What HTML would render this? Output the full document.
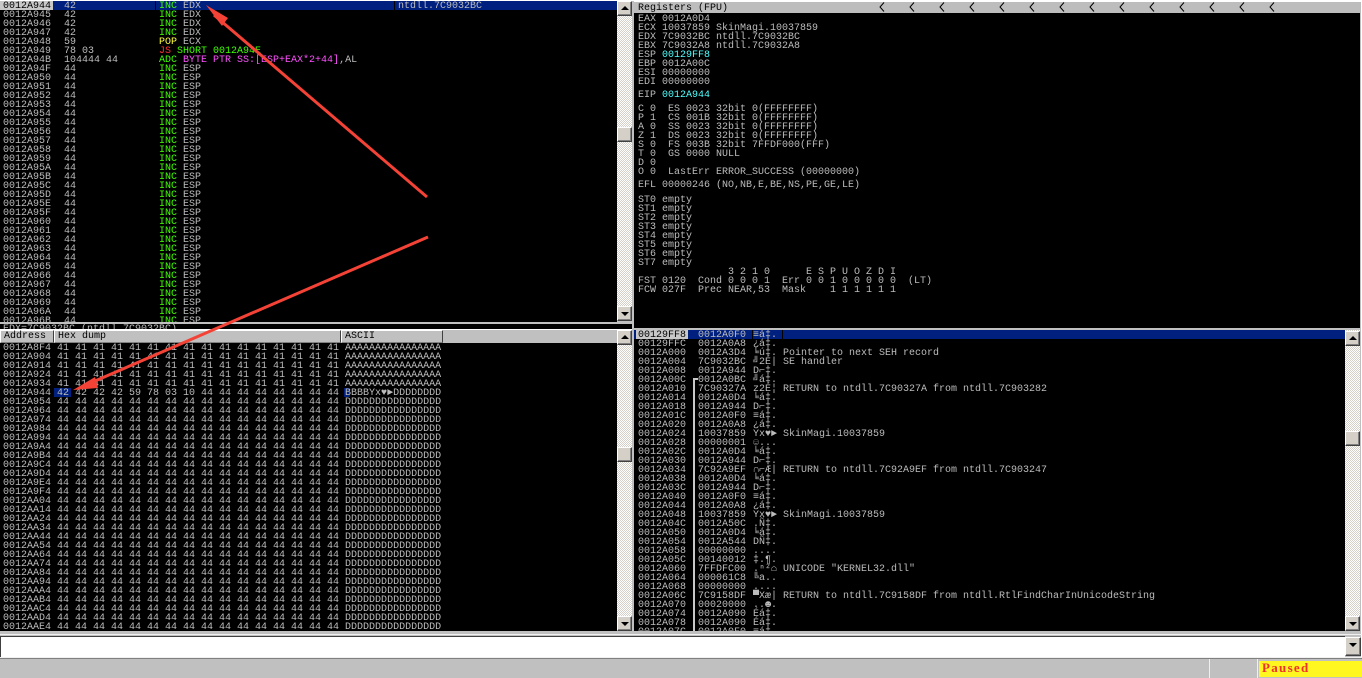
<!DOCTYPE html>
<html><head><meta charset="utf-8">
<style>
html,body{margin:0;padding:0;width:1362px;height:678px;overflow:hidden;background:#c0c0c0}
.a{position:absolute}
pre{position:absolute;margin:0;padding-top:1px;font:10px/9px "Liberation Mono","DejaVu Sans Mono",monospace;color:#bcbcbc;white-space:pre}
.g{color:#40ff00}.y{color:#ffff40}.r{color:#ff3030}.m{color:#ff50ff}.c{color:#50ffff}
.k{background:#000;overflow:hidden}
.sb{background-color:#f4f4f4;background-image:repeating-conic-gradient(#d4d0c8 0 25%,#fff 0 50%);background-size:2px 2px}
.btn{position:absolute;box-sizing:border-box;width:15px;height:15px;background:#d4d0c8;border:1px solid;border-color:#fff #404040 #404040 #fff;box-shadow:inset -1px -1px 0 #808080}
.up:after,.dn:after{content:"";position:absolute;left:3px;border-left:4px solid transparent;border-right:4px solid transparent}
.up:after{top:4px;border-bottom:4px solid #000}
.dn:after{top:5px;border-top:4px solid #000}
.hd{position:absolute;box-sizing:border-box;height:13px;background:#c0c0c0;border-top:1px solid #fff;border-left:1px solid #fff;border-right:1px solid #404040;border-bottom:1px solid #808080;font:10px/12px "Liberation Mono",monospace;color:#000;padding-left:3px;white-space:pre}
</style></head>
<body>
<div class="a" style="left:0;top:0;width:1362px;height:1px;background:#fff"></div>

<!-- Disassembly -->
<div class="a k" style="left:0;top:1px;width:617px;height:321px">
<div class="a" style="left:0;top:0;width:617px;height:9px;background:#00207f"></div>
<div class="a" style="left:0;top:0;width:53px;height:9px;background:#c8c8c8"></div>
<div class="a" style="left:155px;top:0;width:1px;height:9px;background:#000"></div>
<div class="a" style="left:394px;top:0;width:1px;height:9px;background:#000"></div>
<pre style="left:3px;top:0"><span style="color:#000">0012A944</span>
0012A945
0012A946
0012A947
0012A948
0012A949
0012A94B
0012A94F
0012A950
0012A951
0012A952
0012A953
0012A954
0012A955
0012A956
0012A957
0012A958
0012A959
0012A95A
0012A95B
0012A95C
0012A95D
0012A95E
0012A95F
0012A960
0012A961
0012A962
0012A963
0012A964
0012A965
0012A966
0012A967
0012A968
0012A969
0012A96A
0012A96B</pre>
<pre style="left:64px;top:0">42
42
42
42
59
78 03
104444 44
44
44
44
44
44
44
44
44
44
44
44
44
44
44
44
44
44
44
44
44
44
44
44
44
44
44
44
44
44</pre>
<pre style="left:159px;top:0"><span class="g">INC</span> EDX
<span class="g">INC</span> EDX
<span class="g">INC</span> EDX
<span class="g">INC</span> EDX
<span class="y">POP</span> ECX
<span class="r">JS</span> <span class="g">SHORT 0012A94E</span>
<span class="g">ADC</span> <span class="m">BYTE PTR SS:[ESP+EAX*2+44]</span>,AL
<span class="g">INC</span> ESP
<span class="g">INC</span> ESP
<span class="g">INC</span> ESP
<span class="g">INC</span> ESP
<span class="g">INC</span> ESP
<span class="g">INC</span> ESP
<span class="g">INC</span> ESP
<span class="g">INC</span> ESP
<span class="g">INC</span> ESP
<span class="g">INC</span> ESP
<span class="g">INC</span> ESP
<span class="g">INC</span> ESP
<span class="g">INC</span> ESP
<span class="g">INC</span> ESP
<span class="g">INC</span> ESP
<span class="g">INC</span> ESP
<span class="g">INC</span> ESP
<span class="g">INC</span> ESP
<span class="g">INC</span> ESP
<span class="g">INC</span> ESP
<span class="g">INC</span> ESP
<span class="g">INC</span> ESP
<span class="g">INC</span> ESP
<span class="g">INC</span> ESP
<span class="g">INC</span> ESP
<span class="g">INC</span> ESP
<span class="g">INC</span> ESP
<span class="g">INC</span> ESP
<span class="g">INC</span> ESP</pre>
<pre style="left:398px;top:0">ntdll.7C9032BC</pre>
</div>
<div class="a sb" style="left:617px;top:1px;width:15px;height:320px"></div>
<div class="btn up" style="left:617px;top:1px"></div>
<div class="btn" style="left:617px;top:127px"></div>
<div class="btn dn" style="left:617px;top:306px"></div>

<!-- Info pane -->
<div class="a k" style="left:0;top:324px;width:632px;height:5px">
<pre style="left:3px;top:0">EDX=7C9032BC (ntdll.7C9032BC)</pre>
</div>
<div class="a" style="left:0;top:329px;width:632px;height:1px;background:#fff"></div>

<!-- Registers -->
<div class="a" style="left:634px;top:1px;width:727px;height:12px;background:#bdbdbd;border-top:1px solid #fff;box-sizing:border-box"></div>
<pre style="left:638px;top:3px;color:#000">Registers (FPU)</pre>
<svg class="a" style="left:0;top:0" width="1362" height="14"><path fill="none" stroke="#000" d="M884 2.5l-4 4.5 4 4.5M914 2.5l-4 4.5 4 4.5M944 2.5l-4 4.5 4 4.5M974 2.5l-4 4.5 4 4.5M1004 2.5l-4 4.5 4 4.5M1034 2.5l-4 4.5 4 4.5M1064 2.5l-4 4.5 4 4.5M1094 2.5l-4 4.5 4 4.5M1124 2.5l-4 4.5 4 4.5M1154 2.5l-4 4.5 4 4.5M1184 2.5l-4 4.5 4 4.5M1214 2.5l-4 4.5 4 4.5M1244 2.5l-4 4.5 4 4.5M1274 2.5l-4 4.5 4 4.5"/></svg>
<div class="a k" style="left:634px;top:13px;width:726px;height:315px"></div>
<div class="a" style="left:1361px;top:1px;width:1px;height:657px;background:#fff"></div>
<pre style="left:638px;top:14px">EAX 0012A0D4
ECX 10037859 SkinMagi.10037859
EDX 7C9032BC ntdll.7C9032BC
EBX 7C9032A8 ntdll.7C9032A8
ESP <span class="c">00129FF8</span>
EBP 0012A00C
ESI 00000000
EDI 00000000</pre>
<pre style="left:638px;top:90px">EIP <span class="c">0012A944</span></pre>
<pre style="left:638px;top:104px">C 0  ES 0023 32bit 0(FFFFFFFF)
P 1  CS 001B 32bit 0(FFFFFFFF)
A 0  SS 0023 32bit 0(FFFFFFFF)
Z 1  DS 0023 32bit 0(FFFFFFFF)
S 0  FS 003B 32bit 7FFDF000(FFF)
T 0  GS 0000 NULL
D 0
O 0  LastErr ERROR_SUCCESS (00000000)</pre>
<pre style="left:638px;top:180px">EFL 00000246 (NO,NB,E,BE,NS,PE,GE,LE)</pre>
<pre style="left:638px;top:195px">ST0 empty
ST1 empty
ST2 empty
ST3 empty
ST4 empty
ST5 empty
ST6 empty
ST7 empty
               3 2 1 0      E S P U O Z D I
FST 0120  Cond 0 0 0 1  Err 0 0 1 0 0 0 0 0  (LT)
FCW 027F  Prec NEAR,53  Mask    1 1 1 1 1 1</pre>

<!-- Dump -->
<div class="hd" style="left:0;top:330px;width:54px">Address</div>
<div class="hd" style="left:54px;top:330px;width:287px">Hex dump</div>
<div class="hd" style="left:341px;top:330px;width:102px">ASCII</div>
<div class="a k" style="left:0;top:343px;width:617px;height:288px">
<div class="a" style="left:54px;top:45px;width:17px;height:9px;background:#00207f"></div>
<div class="a" style="left:344px;top:45px;width:6px;height:9px;background:#00207f"></div>
<pre style="left:3px;top:0">0012A8F4 41 41 41 41 41 41 41 41 41 41 41 41 41 41 41 41 AAAAAAAAAAAAAAAA
0012A904 41 41 41 41 41 41 41 41 41 41 41 41 41 41 41 41 AAAAAAAAAAAAAAAA
0012A914 41 41 41 41 41 41 41 41 41 41 41 41 41 41 41 41 AAAAAAAAAAAAAAAA
0012A924 41 41 41 41 41 41 41 41 41 41 41 41 41 41 41 41 AAAAAAAAAAAAAAAA
0012A934 41 41 41 41 41 41 41 41 41 41 41 41 41 41 41 41 AAAAAAAAAAAAAAAA
0012A944 42 42 42 42 59 78 03 10 44 44 44 44 44 44 44 44 BBBBYx♥►DDDDDDDD
0012A954 44 44 44 44 44 44 44 44 44 44 44 44 44 44 44 44 DDDDDDDDDDDDDDDD
0012A964 44 44 44 44 44 44 44 44 44 44 44 44 44 44 44 44 DDDDDDDDDDDDDDDD
0012A974 44 44 44 44 44 44 44 44 44 44 44 44 44 44 44 44 DDDDDDDDDDDDDDDD
0012A984 44 44 44 44 44 44 44 44 44 44 44 44 44 44 44 44 DDDDDDDDDDDDDDDD
0012A994 44 44 44 44 44 44 44 44 44 44 44 44 44 44 44 44 DDDDDDDDDDDDDDDD
0012A9A4 44 44 44 44 44 44 44 44 44 44 44 44 44 44 44 44 DDDDDDDDDDDDDDDD
0012A9B4 44 44 44 44 44 44 44 44 44 44 44 44 44 44 44 44 DDDDDDDDDDDDDDDD
0012A9C4 44 44 44 44 44 44 44 44 44 44 44 44 44 44 44 44 DDDDDDDDDDDDDDDD
0012A9D4 44 44 44 44 44 44 44 44 44 44 44 44 44 44 44 44 DDDDDDDDDDDDDDDD
0012A9E4 44 44 44 44 44 44 44 44 44 44 44 44 44 44 44 44 DDDDDDDDDDDDDDDD
0012A9F4 44 44 44 44 44 44 44 44 44 44 44 44 44 44 44 44 DDDDDDDDDDDDDDDD
0012AA04 44 44 44 44 44 44 44 44 44 44 44 44 44 44 44 44 DDDDDDDDDDDDDDDD
0012AA14 44 44 44 44 44 44 44 44 44 44 44 44 44 44 44 44 DDDDDDDDDDDDDDDD
0012AA24 44 44 44 44 44 44 44 44 44 44 44 44 44 44 44 44 DDDDDDDDDDDDDDDD
0012AA34 44 44 44 44 44 44 44 44 44 44 44 44 44 44 44 44 DDDDDDDDDDDDDDDD
0012AA44 44 44 44 44 44 44 44 44 44 44 44 44 44 44 44 44 DDDDDDDDDDDDDDDD
0012AA54 44 44 44 44 44 44 44 44 44 44 44 44 44 44 44 44 DDDDDDDDDDDDDDDD
0012AA64 44 44 44 44 44 44 44 44 44 44 44 44 44 44 44 44 DDDDDDDDDDDDDDDD
0012AA74 44 44 44 44 44 44 44 44 44 44 44 44 44 44 44 44 DDDDDDDDDDDDDDDD
0012AA84 44 44 44 44 44 44 44 44 44 44 44 44 44 44 44 44 DDDDDDDDDDDDDDDD
0012AA94 44 44 44 44 44 44 44 44 44 44 44 44 44 44 44 44 DDDDDDDDDDDDDDDD
0012AAA4 44 44 44 44 44 44 44 44 44 44 44 44 44 44 44 44 DDDDDDDDDDDDDDDD
0012AAB4 44 44 44 44 44 44 44 44 44 44 44 44 44 44 44 44 DDDDDDDDDDDDDDDD
0012AAC4 44 44 44 44 44 44 44 44 44 44 44 44 44 44 44 44 DDDDDDDDDDDDDDDD
0012AAD4 44 44 44 44 44 44 44 44 44 44 44 44 44 44 44 44 DDDDDDDDDDDDDDDD
0012AAE4 44 44 44 44 44 44 44 44 44 44 44 44 44 44 44 44 DDDDDDDDDDDDDDDD</pre>
</div>
<div class="a sb" style="left:617px;top:330px;width:15px;height:300px"></div>
<div class="btn up" style="left:617px;top:330px"></div>
<div class="btn" style="left:617px;top:447px"></div>
<div class="btn dn" style="left:617px;top:616px"></div>

<!-- Stack -->
<div class="a k" style="left:634px;top:330px;width:711px;height:301px">
<div class="a" style="left:0;top:0;width:711px;height:9px;background:#00207f"></div>
<div class="a" style="left:2px;top:0;width:52px;height:9px;background:#c8c8c8"></div>
<div class="a" style="left:118px;top:0;width:1px;height:9px;background:#000"></div>
<div class="a" style="left:148px;top:0;width:1px;height:9px;background:#000"></div>
<div class="a" style="left:59px;top:48px;width:2px;height:253px;background:#c8c8c8"></div>
<div class="a" style="left:59px;top:48px;width:5px;height:2px;background:#c8c8c8"></div>
<pre style="left:4px;top:0"><span style="color:#000">00129FF8</span>
00129FFC
0012A000
0012A004
0012A008
0012A00C
0012A010
0012A014
0012A018
0012A01C
0012A020
0012A024
0012A028
0012A02C
0012A030
0012A034
0012A038
0012A03C
0012A040
0012A044
0012A048
0012A04C
0012A050
0012A054
0012A058
0012A05C
0012A060
0012A064
0012A068
0012A06C
0012A070
0012A074
0012A078
0012A07C</pre>
<pre style="left:64px;top:0">0012A0F0
0012A0A8
0012A3D4
7C9032BC
0012A944
0012A0BC
7C90327A
0012A0D4
0012A944
0012A0F0
0012A0A8
10037859
00000001
0012A0D4
0012A944
7C92A9EF
0012A0D4
0012A944
0012A0F0
0012A0A8
10037859
0012A50C
0012A0D4
0012A544
00000000
00140012
7FFDFC00
000061C8
00000000
7C9158DF
00020000
0012A090
0012A090
0012A0F0</pre>
<pre style="left:119px;top:0">≡á‡.
¿á‡.
╘ú‡.
╝2É|
D⌐‡.
╝á‡.
z2É¦
╘á‡.
D⌐‡.
≡á‡.
¿á‡.
Yx♥►
☺...
╘á‡.
D⌐‡.
∩⌐Æ|
╘á‡.
D⌐‡.
≡á‡.
¿á‡.
Yx♥►
.Ñ‡.
╘á‡.
DÑ‡.
....
‡.¶.
.ⁿ²⌂
╚a..
....
▀Xæ|
..☻.
Éá‡.
Éá‡.
≡á‡.</pre>
<pre style="left:149px;top:0">


Pointer to next SEH record
SE handler


RETURN to ntdll.7C90327A from ntdll.7C903282




SkinMagi.10037859



RETURN to ntdll.7C92A9EF from ntdll.7C903247




SkinMagi.10037859





UNICODE "KERNEL32.dll"


RETURN to ntdll.7C9158DF from ntdll.RtlFindCharInUnicodeString</pre>
</div>
<div class="a sb" style="left:1345px;top:330px;width:15px;height:300px"></div>
<div class="btn up" style="left:1345px;top:331px"></div>
<div class="btn" style="left:1345px;top:431px"></div>
<div class="btn dn" style="left:1345px;top:616px"></div>

<!-- Command bar -->
<div class="a" style="left:0;top:634px;width:1362px;height:1px;background:#f0f0f0"></div>
<div class="a" style="left:0;top:636px;width:1345px;height:21px;box-sizing:border-box;background:#fff;border-top:1px solid #404040;border-left:1px solid #404040"></div>
<div class="btn dn" style="left:1345px;top:637px;height:19px;width:16px"></div>
<div class="a" style="left:0;top:657px;width:1362px;height:1px;background:#f0f0f0"></div>
<div class="a" style="left:0;top:658px;width:1362px;height:1px;background:#808080"></div>

<!-- Status bar -->
<div class="a" style="left:1209px;top:659px;width:1px;height:19px;background:#f0f0f0"></div>
<div class="a" style="left:1257px;top:659px;width:1px;height:19px;background:#f0f0f0"></div>
<div class="a" style="left:1259px;top:661px;width:103px;height:16px;background:#fff71f"></div>
<div class="a" style="left:1262px;top:660px;font:bold 13px/16px 'Liberation Serif',serif;letter-spacing:1.3px;color:#f03030">Paused</div>

<!-- Arrows -->
<svg class="a" style="left:0;top:0" width="1362" height="678">
<path d="M427 197L214 15" stroke="#f44336" stroke-width="3" fill="none"/>
<path d="M206 5L228 18 222 26Z" fill="#f44336"/>
<path d="M428 237L88 384" stroke="#f44336" stroke-width="3" fill="none"/>
<path d="M73 390L95 377 98 388Z" fill="#f44336"/>
</svg>
</body></html>
